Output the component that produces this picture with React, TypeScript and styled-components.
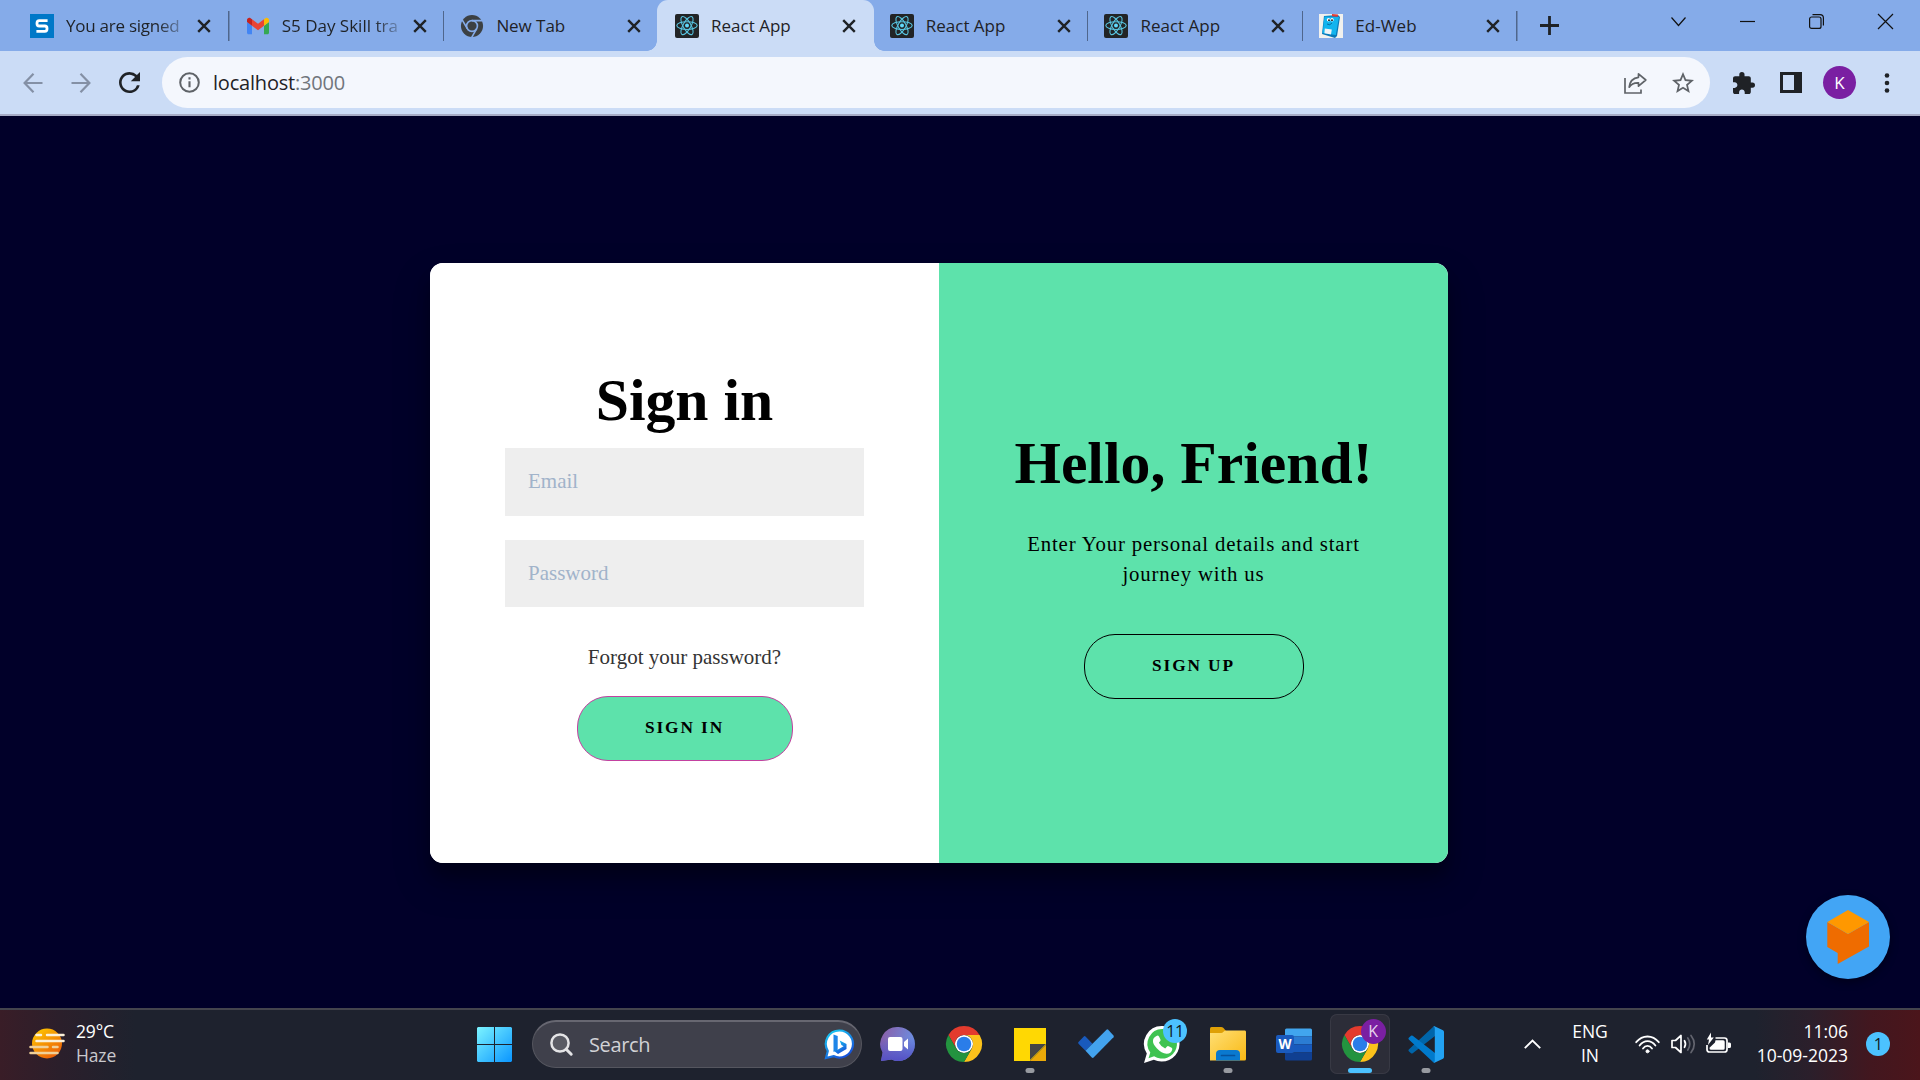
import React from "react";
import styled, { createGlobalStyle, css } from "styled-components";

const ui = `"Open Sans", "Noto Sans", sans-serif`;
const serif = `"Liberation Serif", "Times New Roman", serif`;
const mint = "#5de2ab";
const ink = "#1f2226";

const GlobalStyle = createGlobalStyle`
  * { box-sizing: border-box; }
  body { margin: 0; background: #010029; overflow: hidden; }
  svg { display: block; flex: none; overflow: visible; }
`;

const Screen = styled.div`
  width: 1920px;
  height: 1080px;
  display: flex;
  flex-direction: column;
  font-family: ${ui};
`;

/* ---------- browser tabs ---------- */

const TabStrip = styled.div`
  height: 51px;
  display: flex;
  padding-left: 15px;
  background: #85abe9;
`;

const Tab = styled.div<{ $active?: boolean; $divider?: boolean }>`
  position: relative;
  flex: none;
  width: 214.7px;
  height: 51px;
  display: flex;
  align-items: center;
  padding: 1px 0 0 16px;
  &:first-child { padding-left: 15px; }
  ${(p) =>
    p.$divider &&
    css`
      background: linear-gradient(#4f668c, #4f668c) right 11px / 1.5px 30px no-repeat;
    `}
  ${(p) =>
    p.$active &&
    css`
      width: 216.7px;
      margin-left: -2px;
      padding-left: 18px;
      background: #cbdcf6;
      border-radius: 11px 11px 0 0;
      &::before,
      &::after {
        content: "";
        position: absolute;
        bottom: 0;
        width: 10px;
        height: 10px;
      }
      &::before {
        left: -10px;
        background: radial-gradient(circle at 0 0, transparent 9.5px, #cbdcf6 10px);
      }
      &::after {
        right: -10px;
        background: radial-gradient(circle at 100% 0, transparent 9.5px, #cbdcf6 10px);
      }
    `}
`;

const TabTitle = styled.span<{ $spacing: number; $fade?: boolean }>`
  width: 120px;
  margin-left: 12px;
  white-space: nowrap;
  font-size: 17px;
  line-height: 26px;
  letter-spacing: ${(p) => p.$spacing}px;
  color: ${ink};
  ${(p) => p.$fade && css`mask-image: linear-gradient(90deg, #000 76%, rgba(0, 0, 0, 0.15) 100%);`}
`;

const TabClose = styled.span`
  margin-left: 11px;
`;

const NewTab = styled.span`
  display: flex;
  align-items: center;
  margin-left: 22px;
`;

const WindowControls = styled.div`
  display: flex;
  align-items: flex-start;
  gap: 54px;
  margin-left: auto;
  padding: 14px 27px 0 0;
`;

/* ---------- address bar ---------- */

const Toolbar = styled.div`
  height: 65px;
  display: flex;
  align-items: center;
  padding: 0 23px;
  background: #cbdcf6;
  border-bottom: 2px solid #a7acc6;
`;

const NavButtons = styled.div`
  display: flex;
  align-items: center;
  width: 139px;
  gap: 28px;
`;

const Omnibox = styled.div`
  width: 1548px;
  height: 51px;
  display: flex;
  align-items: center;
  padding: 0 16px 0 17px;
  border-radius: 26px;
  background: #f4f7fd;
`;

const Url = styled.span`
  margin-left: 13px;
  padding-top: 1px;
  font-size: 20px;
  line-height: 28px;
  letter-spacing: -0.2px;
  color: ${ink};
  span { color: #70757c; }
`;

const OmniboxActions = styled.div`
  display: flex;
  gap: 25px;
  margin-left: auto;
`;

const ToolbarActions = styled.div`
  display: flex;
  align-items: center;
  margin-left: 23px;
  gap: 25px;
`;

const Avatar = styled.span`
  width: 33px;
  height: 33px;
  margin: 0 3px 0 -4px;
  border-radius: 50%;
  background: #7a1fa2;
  color: #fff;
  font-size: 17px;
  line-height: 33px;
  text-align: center;
`;

/* ---------- page ---------- */

const Page = styled.main`
  position: relative;
  height: 892px;
  display: flex;
  justify-content: center;
  padding: 147px 42px 0 0;
  background: #010029;
  font-family: ${serif};
`;

const Card = styled.section`
  width: 1018px;
  height: 600px;
  display: flex;
  border-radius: 13px;
  overflow: hidden;
  background: #fff;
  box-shadow: 0 18px 36px rgba(0, 0, 0, 0.25), 0 13px 13px rgba(0, 0, 0, 0.22);
`;

const Panel = styled.div<{ $fill: string; $top: number }>`
  width: 50%;
  display: flex;
  flex-direction: column;
  align-items: center;
  padding-top: ${(p) => p.$top}px;
  background: ${(p) => p.$fill};
`;

const Heading = styled.h1`
  margin: 0;
  font-size: 59.7px;
  line-height: 68px;
  font-weight: 700;
  color: #000;
`;

const Field = styled.input<{ $height: number; $gap: number }>`
  width: 359px;
  height: ${(p) => p.$height}px;
  margin-top: ${(p) => p.$gap}px;
  padding: 0 23px 1px;
  border: 0;
  border-radius: 0;
  background: #eee;
  font: 21px ${serif};
  &::placeholder { color: #a1b3ca; opacity: 1; }
`;

const Forgot = styled.a`
  margin: 35px 0 24px;
  font-size: 21px;
  line-height: 30px;
  color: #333;
`;

const Blurb = styled.p`
  width: 360px;
  margin: 32px 0 45px;
  font-size: 20.8px;
  line-height: 30px;
  letter-spacing: 0.84px;
  text-align: center;
  color: #000;
`;

const PillButton = styled.button<{ $width: number; $border: string }>`
  width: ${(p) => p.$width}px;
  height: 65px;
  padding: 0 0 1px;
  border: 1px solid ${(p) => p.$border};
  border-radius: 31px;
  background: ${mint};
  font: 700 17.3px ${serif};
  letter-spacing: 1.9px;
  text-transform: uppercase;
  color: #000;
`;

const ChatBubble = styled.div`
  position: absolute;
  right: 30px;
  bottom: 29px;
  width: 84px;
  height: 84px;
  border-radius: 50%;
  background: #42a5f5;
  box-shadow: 0 3px 8px rgba(0, 0, 0, 0.4);
`;

/* ---------- taskbar ---------- */

const Taskbar = styled.footer`
  height: 72px;
  display: flex;
  align-items: center;
  padding-bottom: 2px;
  border-top: 2px solid #44444d;
  background: linear-gradient(90deg, #391d27 0, #2b1f2b 60px, #1e222e 135px, #1e222e 1755px, #2b1f2b 1810px, #42171f 1870px, #4b151b 1920px);
`;

const Weather = styled.div`
  flex: none;
  width: 477px;
  display: flex;
  align-items: center;
  gap: 11px;
  padding-left: 29px;
`;

const Stack = styled.div<{ $align?: string; $width?: number; $spacing?: number }>`
  flex: none;
  width: ${(p) => (p.$width ? `${p.$width}px` : "auto")};
  padding-bottom: 2px;
  text-align: ${(p) => p.$align || "left"};
  white-space: nowrap;
  font-size: 17.5px;
  line-height: 24px;
  letter-spacing: ${(p) => p.$spacing || 0}px;
  color: #fff;
`;

const Muted = styled.div`
  color: #c9c9cd;
`;

const SearchBox = styled.div`
  flex: none;
  width: 330px;
  height: 48px;
  display: flex;
  align-items: center;
  margin: 0 3px 0 20px;
  padding: 0 6px 0 17px;
  border: 1px solid #55565f;
  border-top: 2px solid #676771;
  border-radius: 24px;
  background: #3f404b;
`;

const SearchLabel = styled.span`
  flex: 1;
  margin-left: 16px;
  font-size: 20px;
  line-height: 28px;
  letter-spacing: -0.35px;
  color: #d2d2d6;
`;

const AppButton = styled.div<{ $active?: boolean }>`
  position: relative;
  flex: none;
  width: 60px;
  height: 60px;
  margin: 0 3px;
  display: grid;
  place-items: center;
  border-radius: 7px;
  ${(p) =>
    p.$active &&
    css`
      background: #2c2d38;
      box-shadow: inset 0 0 0 1px #383944;
    `}
`;

const Running = styled.i<{ $active?: boolean }>`
  position: absolute;
  bottom: 1px;
  left: 50%;
  width: ${(p) => (p.$active ? 24 : 9)}px;
  height: 5px;
  border-radius: 3px;
  transform: translateX(-50%);
  background: ${(p) => (p.$active ? "#4cc2ff" : "#979aa0")};
`;

const Badge = styled.span<{ $size: number; $fill: string; $color: string }>`
  width: ${(p) => p.$size}px;
  height: ${(p) => p.$size}px;
  border-radius: 50%;
  background: ${(p) => p.$fill};
  color: ${(p) => p.$color};
  font-size: 16px;
  line-height: ${(p) => p.$size}px;
  text-align: center;
  letter-spacing: -0.4px;
`;

const CornerBadge = styled(Badge)`
  position: absolute;
  top: ${(p) => 17 - p.$size / 2}px;
  left: ${(p) => 43 - p.$size / 2}px;
`;

const TrayBadge = styled(Badge)`
  margin-left: auto;
`;

const Tray = styled.div`
  flex: 1;
  display: flex;
  align-items: center;
  padding: 0 30px 0 65px;
`;

const TrayIcons = styled.div`
  display: flex;
  align-items: center;
  gap: 10.5px;
  margin-left: -4px;
`;

/* ---------- drawings ---------- */

const Cross = () => (
  <svg width="14" height="14" viewBox="0 0 14 14" stroke={ink} strokeWidth="2.4">
    <path d="M1.2 1.2 12.8 12.8M12.8 1.2 1.2 12.8" />
  </svg>
);

const SkillIcon = () => (
  <svg width="24" height="24" viewBox="0 0 24 24">
    <path fill="#0078c8" d="M0 0h24v24H0z" />
    <path d="M17.6 6.6H9.2q-2.2 0-2.2 2.3v.8q0 2.3 2.2 2.3h5.6q2.2 0 2.2 2.3v.8q0 2.3-2.2 2.3H6.4" fill="none" stroke="#fff" strokeWidth="2.8" />
  </svg>
);

const GmailIcon = () => (
  <svg width="24" height="24" viewBox="48 27 96 96">
    <path fill="#4285f4" d="M58 108h14V74L52 59v43c0 3.32 2.69 6 6 6" />
    <path fill="#34a853" d="M120 108h14c3.32 0 6-2.69 6-6V59l-20 15" />
    <path fill="#fbbc04" d="M120 48v26l20-15v-8c0-7.42-8.47-11.65-14.4-7.2" />
    <path fill="#ea4335" d="M72 74V48l24 18 24-18v26L96 92" />
    <path fill="#c5221f" d="M52 51v8l20 15V48l-5.6-4.2c-5.94-4.45-14.4-.22-14.4 7.2" />
  </svg>
);

const GreyChrome = () => (
  <svg width="24" height="24" viewBox="-1 -1 50 50">
    <circle cx="24" cy="24" r="23" fill="#3c4043" />
    <g fill="none" stroke="#85abe9" strokeWidth="3.4">
      <circle cx="24" cy="24" r="11.3" />
      <path d="M24 12.7H46M14.2 29.6 3.2 10.6M33.8 29.6 22.8 48.6" />
    </g>
  </svg>
);

const ReactIcon = () => (
  <svg width="24" height="24" viewBox="0 0 24 24">
    <rect width="24" height="24" rx="2" fill="#222426" />
    <circle cx="12" cy="11.6" r="2" fill="#61dafb" />
    <g fill="none" stroke="#58c4e0" strokeWidth="1.1">
      <ellipse cx="12" cy="11.6" rx="10.2" ry="3.9" />
      <ellipse cx="12" cy="11.6" rx="10.2" ry="3.9" transform="rotate(60 12 11.6)" />
      <ellipse cx="12" cy="11.6" rx="10.2" ry="3.9" transform="rotate(120 12 11.6)" />
    </g>
  </svg>
);

const BookIcon = () => (
  <svg width="24" height="24" viewBox="0 0 24 24">
    <path fill="#f1f1ee" d="M0 0h24v24H0z" />
    <path fill="#0878b8" d="M5 2 19 1l2 2-3 19-2 2-13-4z" />
    <path fill="#12b4ee" d="m5.5 2.5 14.500.500-3.200 18L3.500 19z" />
    <path fill="#e43d35" d="m13 0 6 .5-.3 2.200-5.700-.5z" />
    <path fill="#eef3f7" d="m5.800 14.500 7 1-.8 5-6.600-1.300z" />
    <circle cx="9.500" cy="5.800" r="1.700" fill="#fff" />
    <circle cx="13" cy="5.800" r="1.700" fill="#fff" />
    <circle cx="10" cy="6.200" r=".9" fill="#111" />
    <circle cx="13" cy="6.200" r=".9" fill="#111" />
    <path d="M8 10q3 2 5-1" fill="none" stroke="#075a8c" strokeWidth=".8" />
  </svg>
);

const Chrome = () => (
  <svg width="36" height="36" viewBox="0 0 48 48">
    <circle cx="24" cy="24" r="12" fill="#fff" />
    <path fill="#e33b2e" d="M24 12H44.780A23.994 23.994 0 0 0 3.217 12.003L13.608 30l.009-.002A11.985 11.985 0 0 1 24 12Z" />
    <path fill="#fcc21b" d="M34.391 30.003 24 48A23.994 23.994 0 0 0 44.780 12.003H24l-.003.009A11.985 11.985 0 0 1 34.391 30.003Z" />
    <path fill="#23933f" d="M13.609 30.003 3.218 12.006A23.994 23.994 0 0 0 24.003 48L34.393 30.003l-.007-.007a11.985 11.985 0 0 1-20.777.007Z" />
    <circle cx="24" cy="24" r="9.700" fill="#2a7de9" />
  </svg>
);

const Back = ({ flip }: { flip?: boolean }) => (
  <svg width="20" height="22" viewBox="0 0 20 22" fill="none" stroke="#8490a5" strokeWidth="2.200" transform={flip ? "scale(-1 1)" : undefined}>
    <path d="M19.500 11H2M10.500 1.800 1.600 11l8.900 9.200" />
  </svg>
);

const Reload = () => (
  <svg width="21" height="21" viewBox="4 4 16 16" fill={ink}>
    <path d="M17.650 6.350A7.958 7.958 0 0 0 12 4c-4.420 0-7.990 3.580-7.990 8s3.570 8 7.990 8c3.730 0 6.840-2.550 7.730-6h-2.080A5.990 5.990 0 0 1 12 18c-3.310 0-6-2.690-6-6s2.690-6 6-6c1.660 0 3.140.690 4.220 1.780L13 11h7V4z" />
  </svg>
);

const Info = () => (
  <svg width="21" height="21" viewBox="0 0 21 21">
    <circle cx="10.500" cy="10.500" r="9.300" fill="none" stroke="#5f6368" strokeWidth="2" />
    <path d="M10.500 9.300v6M10.500 5.300v2.200" stroke="#5f6368" strokeWidth="2.100" />
  </svg>
);

const Share = () => (
  <svg width="23" height="22" viewBox="0 0 23 22" fill="none" stroke="#5f6368" strokeWidth="1.700">
    <path d="M1 6v15h16v-3.500" />
    <path d="M14.500 1.800 21.800 8l-7.300 6.200v-3.400Q8 10.500 5.200 15.200 6 6.300 14.500 5.300z" strokeLinejoin="round" />
  </svg>
);

const Star = () => (
  <svg width="22" height="21" viewBox="2 2 20 19" fill="#5f6368">
    <path d="m22 9.240-7.190-.620L12 2 9.190 8.630 2 9.240l5.460 4.730L5.820 21 12 17.270 18.180 21l-1.630-7.030zM12 15.400l-3.760 2.270 1-4.280-3.320-2.880 4.380-.380L12 6.100l1.710 4.040 4.380.380-3.320 2.880 1 4.280z" />
  </svg>
);

const Puzzle = () => (
  <svg width="22" height="22" viewBox="2 1 21 21" fill={ink}>
    <path d="M20.500 11H19V7c0-1.100-.900-2-2-2h-4V3.500a2.500 2.500 0 0 0-5 0V5H4c-1.100 0-1.990.900-1.990 2v3.800H3.500c1.490 0 2.700 1.210 2.700 2.700s-1.210 2.700-2.700 2.700H2V20c0 1.100.900 2 2 2h3.800v-1.500c0-1.490 1.210-2.700 2.700-2.700s2.700 1.210 2.700 2.700V22H17c1.100 0 2-.900 2-2v-4h1.500a2.500 2.500 0 0 0 0-5z" />
  </svg>
);

const SidePanel = () => (
  <svg width="22" height="21" viewBox="0 0 22 21">
    <path fill={ink} fillRule="evenodd" d="M0 0h22v21H0zM3 3v15h11V3z" />
  </svg>
);

const Dots = () => (
  <svg width="6" height="20" viewBox="0 0 6 20" fill={ink}>
    <circle cx="3" cy="2.500" r="2.300" />
    <circle cx="3" cy="10" r="2.300" />
    <circle cx="3" cy="17.500" r="2.300" />
  </svg>
);

const Cube = () => (
  <svg width="84" height="84" viewBox="0 0 84 84">
    <path fill="#ef6c00" d="M21.300 27v25l10.400 6v11L63 51.500V27L42 39z" />
    <path fill="#ff9800" d="M42 15 63 27 42 39 21.300 27z" />
  </svg>
);

const HazeIcon = () => (
  <svg width="36" height="30" viewBox="0 0 36 30">
    <defs>
      <linearGradient id="sun" x1="0" y1="0" x2=".7" y2="1">
        <stop stopColor="#ffd000" />
        <stop offset="1" stopColor="#ec5f08" />
      </linearGradient>
    </defs>
    <circle cx="18" cy="14.500" r="15" fill="url(#sun)" />
    <g strokeWidth="2.500" strokeLinecap="round">
      <path d="M7.500 6H12M18 6h16.500M7.500 12h27" stroke="#fbf0d8" />
      <path d="M1.500 18h17M24 18h4.500M1.500 24h27" stroke="#f0d098" />
    </g>
  </svg>
);

const StartIcon = () => (
  <svg width="35" height="35" viewBox="0 0 35 35">
    <defs>
      <linearGradient id="win" x1="0" y1="0" x2="1" y2="1">
        <stop stopColor="#7cf4ff" />
        <stop offset="1" stopColor="#0a95ff" />
      </linearGradient>
    </defs>
    <path fill="url(#win)" d="M1 0h16v17H0V1zM18 0h16l1 1v16H18zM0 18h17v17H1l-1-1zM18 18h17v16l-1 1H18z" />
  </svg>
);

const Magnifier = () => (
  <svg width="23" height="23" viewBox="0 0 23 23" fill="none" stroke="#e4e4e6" strokeWidth="2.500" strokeLinecap="round">
    <circle cx="10" cy="10" r="8.600" fill="#5a5b64" />
    <path d="m16.200 16.200 5 5" strokeWidth="3" />
  </svg>
);

const BingIcon = () => (
  <svg width="31" height="31" viewBox="0 0 31 31">
    <defs>
      <linearGradient id="bing" x1="0" y1="0" x2=".6" y2="1">
        <stop stopColor="#19d3f5" />
        <stop offset="1" stopColor="#1652d8" />
      </linearGradient>
    </defs>
    <path d="M15.500 1.500a13.500 13.500 0 1 1-6 25.600L2 29l1.800-7A13.500 13.500 0 0 1 15.500 1.500z" fill="#fff" stroke="url(#bing)" strokeWidth="2.200" />
    <path d="m9.500 5.500 4.200 1.600v13.700l-4.200 2.300z" fill="#1d85e8" />
    <path d="M9.500 21.500 14 25l8.500-5v-5l-6.800-3.400 1.700 4.400 2.200 1.200-6 3.500z" fill="url(#bing)" />
  </svg>
);

const TeamsIcon = () => (
  <svg width="34" height="34" viewBox="0 0 34 34">
    <defs>
      <linearGradient id="chat" x1=".1" y1=".2" x2=".9" y2=".5">
        <stop stopColor="#8863ad" />
        <stop offset="1" stopColor="#6c8de0" />
      </linearGradient>
      <linearGradient id="chat2" x1="0" y1="0" x2="0" y2="1">
        <stop offset=".3" stopColor="#5550c4" stopOpacity="0" />
        <stop offset="1" stopColor="#5550c4" />
      </linearGradient>
    </defs>
    <path fill="url(#chat)" d="M17.500 0a16.500 17 0 1 1-7 32.400L0 34l1.600-8.500A17 17 0 0 1 17.500 0z" />
    <path fill="url(#chat2)" d="M17.500 0a16.500 17 0 1 1-7 32.400L0 34l1.600-8.500A17 17 0 0 1 17.500 0z" />
    <rect x="7" y="10" width="14.500" height="14" rx="2" fill="#fff" />
    <path d="m23 15 4-3.500v11L23 19z" fill="#fff" />
  </svg>
);

const NoteIcon = () => (
  <svg width="32" height="33" viewBox="0 0 32 33">
    <path fill="#ffd803" d="M0 0h32v17L16 33H0z" />
    <path fill="#454545" d="M16 16h16L16 32z" />
    <path fill="#eaa909" d="M32 17v16H16z" />
  </svg>
);

const TodoIcon = () => (
  <svg width="36" height="30" viewBox="0 0 36 30">
    <path fill="#195abd" d="M5.800 7.500.500 13q-.8.900 0 1.700l7 7 7-7-7-7.200q-.9-.8-1.700 0z" />
    <path fill="#43a3ee" d="M28.500.7 7.500 21.700l6.300 6.800q.9.900 1.800 0L35.500 8.300q.7-.9 0-1.700L30.200.7q-.8-.8-1.700 0z" />
  </svg>
);

const WhatsAppIcon = () => (
  <svg width="36" height="37" viewBox="0 0 36 37">
    <path fill="#fff" d="M18.500 0a17.800 17.800 0 1 1-8.700 33.700L0 37l2.800-9.600A17.800 17.800 0 0 1 18.500 0z" />
    <path fill="#3fc351" d="M18.500 3a14.800 14.800 0 1 1-8.400 27.200L4.500 32.200l1.800-5.700A14.800 14.800 0 0 1 18.500 3z" />
    <path fill="#fff" d="M12.500 10q1.500-1.200 2.500.5l1.500 3q.3 1-.4 1.800l-1.200 1.500q2.200 4.200 6.300 5.700l1.800-2q.7-.7 1.600-.2l3 1.500q1 .6.600 2-1.200 4.200-5.700 4-5-.6-9.500-5.300T9 14.800q0-3 3.500-4.800z" />
  </svg>
);

const FolderIcon = () => (
  <svg width="36" height="34" viewBox="0 0 36 34">
    <defs>
      <linearGradient id="folder" x1="0" y1="0" x2="1" y2="1">
        <stop stopColor="#ffdf75" />
        <stop offset="1" stopColor="#f9b914" />
      </linearGradient>
    </defs>
    <path fill="#dfa006" d="M0 1.500Q0 0 1.500 0H11q1.500 0 2.500 1L16 4v8H0z" />
    <path fill="url(#folder)" d="M0 6h11q1.500 0 2.500-1.200T16 3.500h19q1 0 1 1.500V32q0 1.500-1.500 1.500H0z" />
    <path fill="#0a79cf" d="M6 33.500V27q0-4 4-4h16q4 0 4 4v6.500z" />
    <path d="M11.500 28.500h13" stroke="#06529c" strokeWidth="1.700" strokeLinecap="round" />
  </svg>
);

const WordGlyph = styled.b`
  position: absolute;
  top: 21px;
  left: 12px;
  width: 18px;
  height: 18px;
  border-radius: 2px;
  background: #1a5abd;
  color: #fff;
  font-size: 13.5px;
  line-height: 18px;
  text-align: center;
`;

const WordIcon = () => (
  <svg width="35" height="33" viewBox="0 0 35 33">
    <path fill="#41a5ee" d="M8 8.200V2q0-1.500 1.500-1.500h24Q35 .5 35 2v6.200z" />
    <path fill="#2b7cd3" d="M8 8.200h27v8.100H8z" />
    <path fill="#185abd" d="M8 16.300h27v8.200H8z" />
    <path fill="#103f91" d="M8 24.500h27V31q0 1.500-1.500 1.500h-24Q8 32.500 8 31z" />
  </svg>
);

const CodeIcon = () => (
  <svg width="36" height="37" viewBox="0 0 36 37">
    <path fill="#0065a9" d="M27 .500Q26 0 25 1L.800 23.500q-.8.900 0 1.700L3 27.200q.8.700 1.700 0L27 10z" />
    <path fill="#007acc" d="M27 36.500q-1 .5-2-.5L.800 13.500q-.8-.9 0-1.700L3 9.800q.8-.7 1.700 0L27 27z" />
    <path fill="#22a2f2" d="m27 .500 8 3.800q1 .6 1 1.700v25q0 1.100-1 1.700l-8 3.800q-1 .4-2-.5 1.800 1 1.800-1.500v-32Q26.800 0 25 1q1-1 2-.5z" />
  </svg>
);

const Wifi = () => (
  <svg width="25" height="19" viewBox="0 0 25 19" fill="none" stroke="#fff" strokeWidth="1.800" strokeLinecap="round">
    <path d="M1.200 7.200Q6 1.500 12.500 1.500T23.800 7.200M4.600 10.500Q8 6.200 12.500 6.200t7.900 4.300M8 13.500q1.800-2.600 4.500-2.600t4.500 2.600" />
    <circle cx="12.500" cy="16.300" r="1.500" fill="#fff" strokeWidth="1" />
  </svg>
);

const Speaker = () => (
  <svg width="25" height="20" viewBox="0 0 25 20" fill="none" stroke="#fff" strokeWidth="1.700" strokeLinecap="round" strokeLinejoin="round">
    <path d="M1 6.500h3.500L10 1.500v17l-5.500-5H1z" />
    <path d="M13.500 6.700q2 3.300 0 6.600" />
    <path d="M16.800 4q4 6 0 12M20 1.500q6.500 8.500 0 17" stroke="#62646e" />
  </svg>
);

const Battery = () => (
  <svg width="26" height="20" viewBox="0 0 26 20">
    <path d="M9.500 4h9q2.500 0 2.500 2.500v9q0 2.500-2.500 2.500h-15Q1 18 1 15.500V11" fill="none" stroke="#fff" strokeWidth="1.700" />
    <path fill="#fff" d="M22 8.500h1.500q1.500 0 1.500 1.500v2.500q0 1.500-1.500 1.500H22zM9.500 6.300h7.700q1.500 0 1.500 1.500v6.400q0 1.500-1.500 1.500H4.800q-1.500 0-1.300-2L9 8.500zM5-1.500.800 5.500H3L2 11l5.800-7.500H5z" />
  </svg>
);

const tabs: { title: string; icon: React.ReactNode; spacing: number; active?: boolean; divider?: boolean; fade?: boolean }[] = [
  { title: "You are signed", icon: <SkillIcon />, spacing: -0.25, divider: true, fade: true },
  { title: "S5 Day Skill tra", icon: <GmailIcon />, spacing: 0, divider: true, fade: true },
  { title: "New Tab", icon: <GreyChrome />, spacing: -0.05 },
  { title: "React App", icon: <ReactIcon />, spacing: 0, active: true },
  { title: "React App", icon: <ReactIcon />, spacing: 0, divider: true },
  { title: "React App", icon: <ReactIcon />, spacing: 0, divider: true },
  { title: "Ed-Web", icon: <BookIcon />, spacing: 0.1, divider: true },
];

export default function App() {
  return (
    <Screen>
      <GlobalStyle />
      <TabStrip>
        {tabs.map((t, i) => (
          <Tab key={i} $active={t.active} $divider={t.divider}>
            {t.icon}
            <TabTitle $spacing={t.spacing} $fade={t.fade}>{t.title}</TabTitle>
            <TabClose><Cross /></TabClose>
          </Tab>
        ))}
        <NewTab>
          <svg width="19" height="19" viewBox="0 0 19 19" stroke={ink} strokeWidth="2.800">
            <path d="M0 9.500h19M9.500 0v19" />
          </svg>
        </NewTab>
        <WindowControls>
          <svg width="15" height="15" viewBox="0 0 15 15" fill="none" stroke="#111" strokeWidth="1.200"><path d="m.500 3.500 7 8 7-8" /></svg>
          <svg width="15" height="15" viewBox="0 0 15 15" stroke="#111" strokeWidth="1.200"><path d="M0 7.500h15" /></svg>
          <svg width="15" height="15" viewBox="0 0 15 15" fill="none" stroke="#111" strokeWidth="1.200">
            <rect x=".6" y="3" width="11.400" height="11.400" rx="2" />
            <path d="M3.500.600H11q3.400 0 3.400 3.400v7.500" />
          </svg>
          <svg width="15" height="15" viewBox="0 0 15 15" stroke="#111" strokeWidth="1.200"><path d="m0 0 15 15M15 0 0 15" /></svg>
        </WindowControls>
      </TabStrip>

      <Toolbar>
        <NavButtons><Back /><Back flip /><Reload /></NavButtons>
        <Omnibox>
          <Info />
          <Url>localhost<span>:3000</span></Url>
          <OmniboxActions><Share /><Star /></OmniboxActions>
        </Omnibox>
        <ToolbarActions><Puzzle /><SidePanel /><Avatar>K</Avatar><Dots /></ToolbarActions>
      </Toolbar>

      <Page>
        <Card>
          <Panel $fill="#fff" $top={103}>
            <Heading>Sign in</Heading>
            <Field $height={68} $gap={14} placeholder="Email" />
            <Field $height={67} $gap={24} placeholder="Password" />
            <Forgot>Forgot your password?</Forgot>
            <PillButton $width={216} $border="#c341a0">Sign In</PillButton>
          </Panel>
          <Panel $fill={mint} $top={166}>
            <Heading>Hello, Friend!</Heading>
            <Blurb>Enter Your personal details and start journey with us</Blurb>
            <PillButton $width={220} $border="#000">Sign Up</PillButton>
          </Panel>
        </Card>
        <ChatBubble><Cube /></ChatBubble>
      </Page>

      <Taskbar>
        <Weather>
          <HazeIcon />
          <Stack $spacing={-0.15}>29°C<Muted>Haze</Muted></Stack>
        </Weather>
        <StartIcon />
        <SearchBox>
          <Magnifier />
          <SearchLabel>Search</SearchLabel>
          <BingIcon />
        </SearchBox>
        <AppButton><TeamsIcon /></AppButton>
        <AppButton><Chrome /></AppButton>
        <AppButton><NoteIcon /><Running /></AppButton>
        <AppButton><TodoIcon /></AppButton>
        <AppButton><WhatsAppIcon /><CornerBadge $size={24} $fill="#4cc2ff" $color="#101820">11</CornerBadge></AppButton>
        <AppButton><FolderIcon /><Running /></AppButton>
        <AppButton><WordIcon /><WordGlyph>W</WordGlyph></AppButton>
        <AppButton $active><Chrome /><CornerBadge $size={25} $fill="#7a1fa2" $color="#e6d3ee">K</CornerBadge><Running $active /></AppButton>
        <AppButton><CodeIcon /><Running /></AppButton>
        <Tray>
          <svg width="17" height="10" viewBox="0 0 17 10" fill="none" stroke="#fff" strokeWidth="1.900"><path d="m.800 9.200 7.700-7.700 7.700 7.700" /></svg>
          <Stack $align="center" $width={98}>ENG<div>IN</div></Stack>
          <TrayIcons><Wifi /><Speaker /><Battery /></TrayIcons>
          <Stack $align="right" $width={116}>11:06<div>10-09-2023</div></Stack>
          <TrayBadge $size={24} $fill="#4cc2ff" $color="#101820">1</TrayBadge>
        </Tray>
      </Taskbar>
    </Screen>
  );
}
